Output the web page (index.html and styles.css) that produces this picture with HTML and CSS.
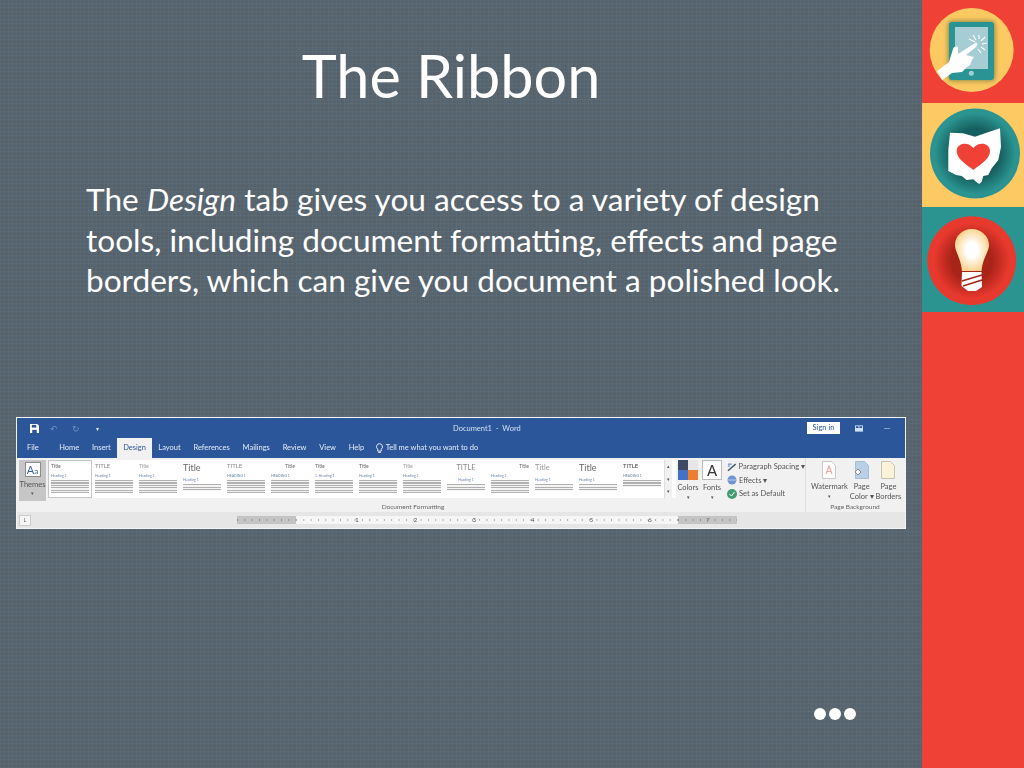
FILE: index.html
```html
<!DOCTYPE html>
<html lang="en">
<head>
    <meta charset="UTF-8">
    <title>The Ribbon</title>
    <link rel="stylesheet" href="styles.css">
</head>
<body>
<div class="page">
    <main class="slide">
        <h1 class="slide-title">The Ribbon</h1>
        <p class="slide-text">The <em>Design</em> tab gives you access to a variety of design tools, including document formatting, effects and page borders, which can give you document a polished look.</p>

        <div class="word">
            <div class="titlebar">
                <div class="quick">
                    <svg class="save" viewBox="0 0 10 10"><path d="M0 0h8l2 2v8H0z" fill="#fff"/><path d="M2 1h5v3H2z" fill="#2b579a"/><path d="M2.5 6.500h5V10h-5z" fill="#2b579a"/></svg>
                    <span class="undo">&#8630;</span>
                    <span class="undo redo">&#8635;</span>
                    <span class="undo caret">&#9662;</span>
                </div>
                <div class="doc-name">Document1 &nbsp;-&nbsp; Word</div>
                <div class="signin">Sign in</div>
                <svg class="display-opts" viewBox="0 0 9 7"><path d="M0 0h9v7H0z" fill="#cfe0f3"/><path d="M1 1h3v2H1zM5 1h3v2H5z" fill="#2b579a"/></svg>
                <div class="minimize"></div>
            </div>
            <div class="tabs">
                <span class="tab tab-file">File</span>
                <span class="tab">Home</span>
                <span class="tab">Insert</span>
                <span class="tab tab-active">Design</span>
                <span class="tab">Layout</span>
                <span class="tab">References</span>
                <span class="tab">Mailings</span>
                <span class="tab">Review</span>
                <span class="tab">View</span>
                <span class="tab">Help</span>
                <span class="tab tab-tell">
                    <svg class="bulb-mini" viewBox="0 0 8 12"><path d="M4 .5a3.500 3.500 0 0 1 2 6.300V9H2V6.800A3.500 3.500 0 0 1 4 .5zM2.500 10.500h3" fill="none" stroke="#fff"/></svg>
                    Tell me what you want to do
                </span>
            </div>
            <div class="ribbon">
                <div class="themes">
                    <div class="themes-icon">A<small>a</small></div>
                    <div>Themes</div>
                    <div class="arrow">&#9662;</div>
                </div>
                <div class="doc-format">
                    <div class="gallery">
                        <div class="thumb thumb-selected"><b>Title</b><i>Heading 1</i><u></u></div>
                        <div class="thumb"><b class="caps">TITLE</b><i>Heading 1</i><u></u></div>
                        <div class="thumb"><b class="pale">Title</b><i>Heading 1</i><u></u></div>
                        <div class="thumb"><b class="big">Title</b><i>Heading 1</i><u class="short"></u></div>
                        <div class="thumb"><b class="caps">TITLE</b><i>HEADING 1</i><u></u></div>
                        <div class="thumb"><b class="center">Title</b><i>HEADING 1</i><u></u></div>
                        <div class="thumb"><b>Title</b><i>1. Heading 1</i><u></u></div>
                        <div class="thumb"><b>Title</b><i>Heading 1</i><u></u></div>
                        <div class="thumb"><b class="pale">Title</b><i>Heading 1</i><u></u></div>
                        <div class="thumb"><b class="caps center mid">TITLE</b><i class="center">Heading 1</i><u class="short"></u></div>
                        <div class="thumb"><b class="right">Title</b><i>Heading 1</i><u></u></div>
                        <div class="thumb"><b class="mid pale">Title</b><i>Heading 1</i><u class="short"></u></div>
                        <div class="thumb"><b class="big">Title</b><i>Heading 1</i><u class="short"></u></div>
                        <div class="thumb"><b class="caps dark">TITLE</b><i>HEADING 1</i><u class="short"></u></div>
                        <div class="scroller"><span>&#9652;</span><span>&#9662;</span><span>&#9662;</span></div>
                    </div>
                    <div class="group-label group-label-doc">Document Formatting</div>
                </div>
                <div class="big-btn">
                    <svg class="swatch" viewBox="0 0 20 20"><path d="M0 0h10v10H0z" fill="#3e4a63"/><path d="M10 0h10v10H10z" fill="#e7e6e6"/><path d="M0 10h10v10H0z" fill="#4472c4"/><path d="M10 10h10v10H10z" fill="#ed7d31"/></svg>
                    <div>Colors</div>
                    <div class="arrow">&#9662;</div>
                </div>
                <div class="big-btn">
                    <div class="font-box">A</div>
                    <div>Fonts</div>
                    <div class="arrow">&#9662;</div>
                </div>
                <div class="small-btns">
                    <div class="small-btn">
                        <svg viewBox="0 0 10 10"><path d="M1 9l8-7" stroke="#44546a" stroke-width="1.500"/><path d="M1 2h4M1 4h2" stroke="#4472c4"/></svg>
                        Paragraph Spacing &#9662;
                    </div>
                    <div class="small-btn">
                        <svg viewBox="0 0 10 10"><circle cx="5" cy="5" r="4.500" fill="#6f94d6"/><path d="M0 5h10" stroke="#b9cdee"/></svg>
                        Effects &#9662;
                    </div>
                    <div class="small-btn">
                        <svg viewBox="0 0 10 10"><circle cx="5" cy="5" r="5" fill="#3f9c73"/><path d="M2.500 5l2 2 3-4" fill="none" stroke="#fff"/></svg>
                        Set as Default
                    </div>
                </div>
                <div class="page-bg">
                    <div class="page-btns">
                        <div class="page-btn">
                            <svg viewBox="0 0 14 18"><path d="M.5.500h9l4 4v13H.500z" fill="#fff" stroke="#c9c9c9"/><path d="M4 13l3-8 3 8M5 10.500h4" fill="none" stroke="#eda9a0" stroke-width="1.200"/></svg>
                            <div>Watermark</div>
                            <div class="arrow">&#9662;</div>
                        </div>
                        <div class="page-btn">
                            <svg viewBox="0 0 14 18"><path d="M.5.500h9l4 4v13H.500z" fill="#b8cfe8" stroke="#a8bcd2"/><path d="M0 11l3-3 3 3-3 3z" fill="#fff" stroke="#888"/></svg>
                            <div>Page<br>Color &#9662;</div>
                        </div>
                        <div class="page-btn">
                            <svg viewBox="0 0 14 18"><path d="M.5.500h9l4 4v13H.500z" fill="#fbf3d9" stroke="#c9c4ad"/></svg>
                            <div>Page<br>Borders</div>
                        </div>
                    </div>
                    <div class="group-label">Page Background</div>
                </div>
            </div>
            <div class="rulerbar">
                <div class="tab-stop">L</div>
                <div class="ruler">
                    <span class="ruler-margin"></span>
                    <span class="ruler-body">
                        <span>1</span><span>2</span><span>3</span><span>4</span><span>5</span><span>6</span>
                    </span>
                    <span class="ruler-margin ruler-end">7</span>
                </div>
            </div>
        </div>

        <div class="more"><span></span><span></span><span></span></div>
    </main>

    <aside class="sidebar">
        <div class="panel panel-red">
            <svg viewBox="2 0 102 103">
                <defs>
                    <filter id="soft" x="-30%" y="-30%" width="160%" height="160%"><feGaussianBlur stdDeviation="2.500"/></filter>
                </defs>
                <circle cx="51.700" cy="50" r="42" fill="#fdc962"/>
                <rect x="28" y="21" width="47" height="60" rx="4" fill="#8a8a45" filter="url(#soft)"/>
                <rect x="29" y="22" width="45" height="58" rx="3" fill="#2a9393"/>
                <rect x="35" y="27" width="33" height="42" fill="#a5cdd3"/>
                <circle cx="51.300" cy="73.300" r="2.500" fill="#a5cdd3"/>
                <path d="M17 71L29 62 33 49C34 46 37 46 38 48L38 54 55 43C58 42 58 45 56 47L46 55 54 57 52 60 50 65 47 67 42 72 32 73 22 80z" fill="#fff"/>
                <path d="M55 42l-6-3M56 40l-3-5M59 39l0-4M61 41l4-4M62 44l5-1M61 47l4 3M58 49l3 4" stroke="#fff" stroke-width="1.100"/>
            </svg>
        </div>
        <div class="panel panel-yellow">
            <svg viewBox="2 103 102 104">
                <defs>
                    <radialGradient id="tealShade"><stop offset="55%" stop-color="#15605f"/><stop offset="90%" stop-color="#2b9490"/></radialGradient>
                </defs>
                <circle cx="55" cy="153.500" r="45" fill="url(#tealShade)"/>
                <path d="M30 132.700L43 133.300 55 136.700 65 133.300 80 128.300 81 147 78.300 160 71.700 168.300 68.300 175 63.300 176 61.700 181.700 59.300 184 56 181.700 53.300 179.300 46.700 180 41.700 176 36 175 28.300 171 28.300 150z" fill="#fff"/>
                <path d="M53.300 170C46 164 36.700 159 36.700 151 36.700 143 48 141 53.300 148 58.700 141 70 143 70 151 70 159 60.700 164 53.300 170z" fill="#ef4136"/>
            </svg>
        </div>
        <div class="panel panel-teal">
            <svg viewBox="2 207 102 105">
                <defs>
                    <radialGradient id="redShade"><stop offset="45%" stop-color="#a82318"/><stop offset="85%" stop-color="#e8392e"/></radialGradient>
                    <radialGradient id="glow"><stop offset="35%" stop-color="#fff"/><stop offset="100%" stop-color="#fbd592"/></radialGradient>
                </defs>
                <circle cx="51.700" cy="260.700" r="44.500" fill="url(#redShade)"/>
                <path d="M51.700 229C61 229 69 236 69 245 69 252 63 257 61.500 271H42C40.500 257 35 252 35 245 35 236 42.500 229 51.700 229z" fill="url(#glow)"/>
                <path d="M42 272H61.500L62 287 56 291H48L41.500 286z" fill="#fff"/>
                <path d="M42 281L62 275M43 286L62 280" stroke="#a82318" stroke-width="1.400"/>
            </svg>
        </div>
        <div class="panel-rest"></div>
    </aside>
</div>
</body>
</html>
```

FILE: styles.css
```css
* {
    box-sizing: border-box;
}

html, body {
    margin: 0;
    height: 100%;
}

body {
    font-family: "Lato", "Liberation Sans", sans-serif;
    overflow: hidden;
}

.page {
    display: flex;
    width: 1024px;
    height: 768px;
}

/* slide area */
.slide {
    width: 922px;
    height: 768px;
    display: flex;
    flex-direction: column;
    color: #fff;
    background-color: #586671;
    background-image:
        repeating-linear-gradient(0deg, rgba(255,255,255,.025) 0 1px, rgba(0,0,0,.025) 1px 2px, transparent 2px 4px),
        repeating-linear-gradient(90deg, rgba(255,255,255,.025) 0 1px, rgba(0,0,0,.025) 1px 2px, transparent 2px 4px),
        repeating-linear-gradient(90deg, rgba(0,0,0,.015) 0 8px, transparent 8px 16px),
        repeating-linear-gradient(0deg, rgba(0,0,0,.015) 0 8px, transparent 8px 16px);
}

.slide-title {
    margin: 0;
    padding: 36px 20px 0 0;
    height: 123px;
    font-size: 59.400px;
    line-height: 78px;
    font-weight: 400;
    text-align: center;
}

.slide-text {
    margin: 56px 0 0 86px;
    width: 770px;
    height: 238px;
    font-size: 31.600px;
    line-height: 40.500px;
}

/* word window picture */
.word {
    width: 890px;
    height: 112px;
    margin-left: 16px;
    border: 1px solid #f3f5f6;
    background: #f1f1f1;
    color: #555;
    font-size: 8px;
    display: flex;
    flex-direction: column;
    filter: blur(.45px);
}

.titlebar {
    height: 20px;
    display: flex;
    align-items: center;
    background: #2b579a;
    color: #cfe0f3;
}

.quick {
    width: 436px;
    padding-left: 13px;
    display: flex;
    align-items: center;
    gap: 11px;
}

.save {
    width: 9px;
    height: 9px;
}

.undo {
    color: #6d8fc2;
    font-size: 9px;
}

.redo {
    margin-left: 3px;
}

.caret {
    margin-left: 5px;
    color: #dbe6f3;
    font-size: 6px;
}

.doc-name {
    width: 354px;
    font-size: 7.500px;
}

.signin {
    width: 33px;
    height: 12px;
    background: #fff;
    color: #2b579a;
    font-size: 7.500px;
    line-height: 12px;
    text-align: center;
}

.display-opts {
    width: 8px;
    height: 7px;
    margin-left: 15px;
}

.minimize {
    width: 6px;
    height: 1px;
    margin-left: 21px;
    background: #7f9dcb;
}

.tabs {
    height: 20px;
    display: flex;
    align-items: stretch;
    background: #2b579a;
    color: #e3ecf7;
}

.tab {
    padding: 0 6.400px;
    font-size: 7.500px;
    line-height: 20px;
}

.tab-file {
    padding: 0 10px;
    margin-right: 4px;
}

.tab-active {
    background: #f1f1f1;
    color: #2b579a;
    padding: 0 6px;
}

.tab-tell {
    display: flex;
    align-items: center;
    gap: 3px;
    padding-left: 5px;
}

.bulb-mini {
    width: 7px;
    height: 11px;
}

.ribbon {
    height: 54px;
    display: flex;
    background: #f1f1f1;
}

.themes {
    width: 27px;
    height: 41px;
    margin: 2px 2px 0 2px;
    padding-top: 2px;
    background: #c6c6c6;
    font-size: 7.500px;
    text-align: center;
    line-height: 9px;
}

.themes-icon {
    width: 16px;
    height: 15px;
    margin: 0 auto 3px;
    border: 1px solid #8b8b8b;
    background: #fff;
    color: #3b5f92;
    font-size: 11px;
    line-height: 13px;
}

.themes-icon small {
    font-size: 8px;
}

.arrow {
    font-size: 5px;
    line-height: 8px;
}

.doc-format {
    width: 628px;
}

.gallery {
    height: 38px;
    margin-top: 2px;
    display: flex;
    background: #fff;
}

.thumb {
    width: 44px;
    padding: 2px 3px;
    overflow: hidden;
    display: flex;
    flex-direction: column;
    color: #666;
}

.thumb-selected {
    border: 1px solid #c6c6c6;
    padding: 1px 2px;
}

.thumb b {
    font-size: 5px;
    line-height: 8px;
    height: 8px;
    font-weight: 400;
}

.thumb b.caps {
    font-size: 6px;
    color: #888;
}

.thumb b.caps.dark {
    color: #444;
}

.thumb b.pale {
    color: #999;
}

.thumb b.big {
    font-size: 9px;
    line-height: 12px;
    height: 12px;
}

.thumb b.mid {
    font-size: 7.500px;
    line-height: 12px;
    height: 12px;
}

.thumb .center {
    text-align: center;
}

.thumb .right {
    text-align: right;
}

.thumb i {
    margin-top: 3px;
    font-size: 3.500px;
    line-height: 6px;
    font-style: normal;
    color: #6a84a8;
}

.thumb u {
    display: block;
    height: 13px;
    margin-top: 1px;
    background: repeating-linear-gradient(180deg, #b0b0b0 0 1px, #f4f4f4 1px 2.500px);
}

.thumb u.short {
    height: 7px;
}

.scroller {
    width: 8px;
    display: flex;
    flex-direction: column;
    background: #f1f1f1;
    border-left: 1px solid #ddd;
    font-size: 5px;
    text-align: center;
}

.scroller span {
    flex: 1;
    line-height: 12px;
}

.group-label {
    margin-top: 4px;
    font-size: 6.500px;
    line-height: 10px;
    text-align: center;
    color: #666;
}

.group-label-doc {
    padding-left: 102px;
}

.big-btn {
    width: 24px;
    padding-top: 2px;
    font-size: 7.500px;
    line-height: 10px;
    text-align: center;
}

.swatch {
    display: block;
    width: 20px;
    height: 20px;
    margin: 0 auto 3px;
}

.font-box {
    width: 20px;
    height: 20px;
    margin: 0 auto 3px;
    border: 1px solid #bbb;
    background: #fff;
    color: #333;
    font-size: 15px;
    line-height: 18px;
}

.small-btns {
    width: 82px;
    padding: 2px 0 0 3px;
    border-right: 1px solid #dedede;
}

.small-btn {
    height: 13.500px;
    display: flex;
    align-items: center;
    gap: 2px;
    font-size: 7.500px;
    white-space: nowrap;
}

.small-btn svg {
    width: 10px;
    height: 10px;
}

.page-bg {
    width: 98px;
}

.page-btns {
    height: 40px;
    display: flex;
    padding: 3px 0 0 5px;
    gap: 2px;
}

.page-btn {
    font-size: 7.500px;
    line-height: 10px;
    text-align: center;
    white-space: nowrap;
}

.page-btn svg {
    display: block;
    width: 14px;
    height: 18px;
    margin: 0 auto 3px;
}

.rulerbar {
    flex: 1;
    display: flex;
    align-items: center;
    background: #e6e6e6;
}

.tab-stop {
    width: 12px;
    height: 11px;
    margin-left: 2px;
    background: #f5f5f5;
    border: 1px solid #ccc;
    font-size: 5px;
    line-height: 9px;
    text-align: center;
}

.ruler {
    width: 500px;
    height: 8px;
    margin-left: 206px;
    display: flex;
    font-size: 6.500px;
    line-height: 8px;
    white-space: nowrap;
}

.ruler-margin {
    width: 59px;
    flex: none;
    overflow: hidden;
    color: #777;
    background: linear-gradient(90deg, #8d8d8d 1px, transparent 1px) 0 50% / 7.330px 2px repeat-x, #c4c4c4;
}

.ruler-body {
    width: 382px;
    flex: none;
    padding-left: 59px;
    display: flex;
    background: linear-gradient(90deg, #aaa 1px, transparent 1px) 0 50% / 7.330px 2px repeat-x, #f6f6f6;
}

.ruler-body span {
    width: 58.600px;
    flex: none;
    color: #555;
}

.ruler-end {
    padding-left: 28px;
}

/* three dots */
.more {
    display: flex;
    gap: 3px;
    margin: 179px 0 0 814px;
}

.more span {
    width: 12px;
    height: 12px;
    border-radius: 50%;
    background: #fff;
}

/* right column */
.sidebar {
    width: 102px;
    display: flex;
    flex-direction: column;
    background: #ef4136;
}

.panel svg {
    display: block;
    width: 100%;
    height: 100%;
}

.panel-red {
    height: 103px;
    background: #ef4136;
}

.panel-yellow {
    height: 104px;
    background: #fdc962;
}

.panel-teal {
    height: 105px;
    background: #2b9490;
}

.panel-rest {
    flex: 1;
}
```
